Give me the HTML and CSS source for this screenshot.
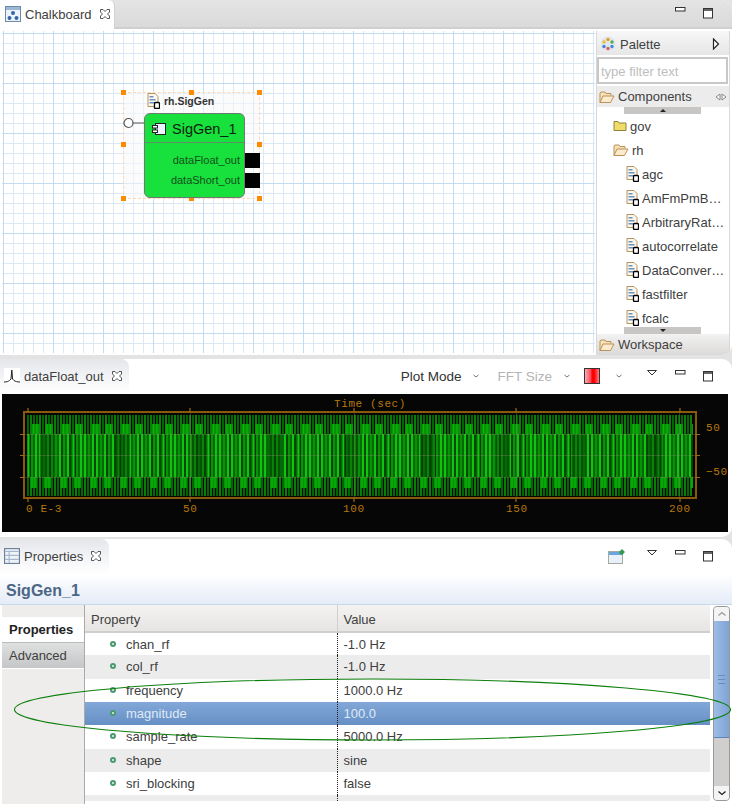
FILE: index.html
```html
<!DOCTYPE html>
<html>
	<head>
		<meta charset="UTF-8">
		<title>Chalkboard</title>
		<link rel="stylesheet" href="styles.css">
	</head>
	<body>
		<svg class="defs" width="0" height="0">
			<defs>
				<symbol id="i-close" viewBox="0 0 12 12">
					<path d="M1.500 1.500h2.500l2 2 2-2h2.500v2.500l-2 2 2 2v2.500h-2.500l-2-2-2 2h-2.500v-2.500l2-2-2-2z" fill="#fff" stroke="#555"/>
				</symbol>
				<symbol id="i-min" viewBox="0 0 12 12">
					<rect x="1.500" y=".5" width="9.500" height="3.500" fill="#fff" stroke="#333"/>
				</symbol>
				<symbol id="i-max" viewBox="0 0 12 12">
					<rect x="1.500" y="1.500" width="9" height="9.500" fill="#fff" stroke="#333"/>
					<path d="M1.500 3h9" stroke="#333" stroke-width="1.500"/>
				</symbol>
				<symbol id="i-menu" viewBox="0 0 12 12">
					<path d="M1.500 .5h9l-4.500 4.500z" fill="#fff" stroke="#333"/>
				</symbol>
				<symbol id="i-chev" viewBox="0 0 8 8">
					<path d="M1.500 3l2.500 2 2.500-2" fill="none" stroke="#777"/>
				</symbol>
				<symbol id="i-open" viewBox="0 0 16 14">
					<path d="M1 12.500v-9.500l1-1h4l1 1.500h5v2" fill="#f7e2b8" stroke="#b9925a"/>
					<path d="M1 12.500l3-6.500h11l-3.500 6.500z" fill="#fbeacb" stroke="#b9925a"/>
				</symbol>
				<symbol id="i-folder" viewBox="0 0 14 12">
					<path d="M1 10.500v-9h4l1 1.500h7v7.500z" fill="#f1dc6a" stroke="#8c8240"/>
				</symbol>
				<symbol id="i-doc" viewBox="0 0 13 16">
					<path d="M1 .5h7l3 3v10h-10z" fill="#fdf8ee" stroke="#b4945c"/>
					<path d="M2.500 3h4v1.500h-4zm0 3h6v1.500h-6zm0 3h6v1.500h-6z" fill="#6f8fc0"/>
					<rect x="7.500" y="9.500" width="5" height="6" rx="1" fill="#fff" stroke="#000" stroke-width="1.300"/>
				</symbol>
			</defs>
		</svg>

		<!-- chalkboard -->
		<section class="panel top">
			<div class="tabbar grey">
				<div class="tab">
					<svg width="16" height="16" viewBox="0 0 16 16"><rect x=".5" y=".5" width="15" height="15" fill="#eef3fa" stroke="#6f8aa8"/><path d="M1 1h14v3h-14z" fill="#9db7d6"/><circle cx="8" cy="7" r="2" fill="#2f68a8"/><circle cx="4.500" cy="12" r="2" fill="#2f68a8"/><circle cx="11.500" cy="12" r="2" fill="#2f68a8"/></svg>
					<span>Chalkboard</span>
					<svg class="x" width="12" height="12"><use href="#i-close"/></svg>
				</div>
				<div class="tools">
					<svg width="12" height="12"><use href="#i-min"/></svg>
					<svg width="12" height="12"><use href="#i-max"/></svg>
				</div>
			</div>
			<div class="board">
				<div class="canvas">
					<div class="select">
						<i class="h h1"></i><i class="h h2"></i><i class="h h3"></i><i class="h h4"></i>
						<i class="h h5"></i><i class="h h6"></i><i class="h h7"></i><i class="h h8"></i>
					</div>
					<div class="node-name">
						<svg width="13" height="16"><use href="#i-doc"/></svg>
						<span>rh.SigGen</span>
					</div>
					<svg class="lolly" width="22" height="12"><circle cx="5.500" cy="6" r="4.500" fill="#fff" stroke="#555" stroke-width="1.200"/><path d="M10 6h11" stroke="#555"/></svg>
					<div class="node">
						<div class="node-title">
							<svg width="14" height="12" viewBox="0 0 14 12"><rect x="3.500" y=".5" width="10" height="11" fill="#e8f4ff" stroke="#222"/><rect x=".5" y="2.500" width="5" height="2.500" fill="#fff" stroke="#222"/><rect x=".5" y="7" width="5" height="2.500" fill="#fff" stroke="#222"/></svg>
							<span>SigGen_1</span>
						</div>
						<div class="node-port">dataFloat_out</div>
						<div class="node-port">dataShort_out</div>
					</div>
					<i class="port p1"></i>
					<i class="port p2"></i>
				</div>
				<div class="palette">
					<div class="pal-head">
						<svg width="16" height="16" viewBox="0 0 16 16"><circle cx="8" cy="8" r="7.500" fill="#dfe6f2"/><circle cx="8" cy="3.500" r="1.700" fill="#e8a020"/><circle cx="12" cy="6" r="1.700" fill="#58b040"/><circle cx="12" cy="10.500" r="1.700" fill="#3f8fd8"/><circle cx="8" cy="12.500" r="1.700" fill="#e06050"/><circle cx="4" cy="10.500" r="1.700" fill="#5080d0"/><circle cx="4" cy="6" r="1.700" fill="#e8c030"/></svg>
						<span>Palette</span>
						<svg class="pal-arrow" width="8" height="12" viewBox="0 0 8 12"><path d="M1.500 1l5 5-5 5z" fill="#fff" stroke="#222" stroke-width="1.200"/></svg>
					</div>
					<div class="pal-filter">type filter text</div>
					<div class="drawer open-drawer">
						<svg width="16" height="14"><use href="#i-open"/></svg>
						<span>Components</span>
						<svg class="pin" width="12" height="8" viewBox="0 0 12 8"><path d="M5 1l-4 3 4 3zm2 0l4 3-4 3z" fill="#fff" stroke="#888"/></svg>
					</div>
					<div class="tree">
						<div class="scroll-btn up"><b></b></div>
						<div class="item lvl1"><svg width="14" height="12"><use href="#i-folder"/></svg>gov</div>
						<div class="item lvl1"><svg width="16" height="14"><use href="#i-open"/></svg>rh</div>
						<div class="item lvl2"><svg width="13" height="16"><use href="#i-doc"/></svg>agc</div>
						<div class="item lvl2"><svg width="13" height="16"><use href="#i-doc"/></svg>AmFmPmB…</div>
						<div class="item lvl2"><svg width="13" height="16"><use href="#i-doc"/></svg>ArbitraryRat…</div>
						<div class="item lvl2"><svg width="13" height="16"><use href="#i-doc"/></svg>autocorrelate</div>
						<div class="item lvl2"><svg width="13" height="16"><use href="#i-doc"/></svg>DataConver…</div>
						<div class="item lvl2"><svg width="13" height="16"><use href="#i-doc"/></svg>fastfilter</div>
						<div class="item lvl2"><svg width="13" height="16"><use href="#i-doc"/></svg>fcalc</div>
						<div class="scroll-btn down"><b></b></div>
					</div>
					<div class="drawer">
						<svg width="16" height="14"><use href="#i-open"/></svg>
						<span>Workspace</span>
					</div>
				</div>
			</div>
		</section>

		<!-- plot -->
		<section class="panel middle">
			<div class="tabbar">
				<div class="tab soft">
					<svg width="16" height="16" viewBox="0 0 16 16"><rect width="16" height="16" fill="#fff"/><path d="M0 14c3 0 4-.5 5.500-1.500l1.500-1.500.8-9 .8 9 1.400 1.500c1.500 1 3 1.500 6 1.500" fill="none" stroke="#222"/></svg>
					<span>dataFloat_out</span>
					<svg class="x" width="12" height="12"><use href="#i-close"/></svg>
				</div>
				<div class="tools plot-tools">
					<span class="combo">Plot Mode</span>
					<svg width="8" height="8"><use href="#i-chev"/></svg>
					<span class="combo off">FFT Size</span>
					<svg width="8" height="8"><use href="#i-chev"/></svg>
					<svg class="red" width="16" height="16" viewBox="0 0 16 16"><defs><linearGradient id="redbar"><stop offset="0" stop-color="#ffb0b8"/><stop offset=".4" stop-color="#ff5060"/><stop offset=".5" stop-color="#f00"/><stop offset=".65" stop-color="#f00"/><stop offset="1" stop-color="#ff8a94"/></linearGradient></defs><rect x=".5" y=".5" width="15" height="15" fill="url(#redbar)" stroke="#333"/></svg>
					<svg class="chev3" width="8" height="8"><use href="#i-chev"/></svg>
					<svg class="vm" width="12" height="12"><use href="#i-menu"/></svg>
					<svg width="12" height="12"><use href="#i-min"/></svg>
					<svg width="12" height="12"><use href="#i-max"/></svg>
				</div>
			</div>
			<div class="plot">
				<svg width="726" height="138" viewBox="2 394 726 138">
					<defs>
						<pattern id="thin" width="30" height="10" patternUnits="userSpaceOnUse" x="27">
							<path d="M1 0v10M7 0v10M10 0v10M16 0v10M22 0v10M25 0v10" stroke="#007000" stroke-width="1.800"/>
							<path d="M4 0v10M13 0v10M19 0v10M28 0v10" stroke="#0aa80a" stroke-width="1.500"/>
						</pattern>
						<pattern id="blocksUp" width="30" height="10" patternUnits="userSpaceOnUse" x="30">
							<path d="M2 0h8v10h-8zM15 0h8v10h-8z" fill="#0a8f0a"/>
							<path d="M3.500 0v10M7 0v10M17 0v10M20.500 0v10" stroke="#0b0" stroke-width="1.200"/>
						</pattern>
						<pattern id="blocksDown" width="30" height="11" patternUnits="userSpaceOnUse" x="28">
							<path d="M2 0h7v11h-7zM16 0h7v11h-7z" fill="#0a8f0a"/>
							<path d="M4 0v11M7 0v11M18 0v11M21 0v11" stroke="#0b0" stroke-width="1.200"/>
						</pattern>
						<pattern id="mid" width="45" height="21" patternUnits="userSpaceOnUse" x="27">
							<rect width="45" height="21" fill="#046804"/>
							<path d="M1.500 0v21M9 0v21M13 0v21M21 0v21M25 0v21M33 0v21M41 0v21" stroke="#0fc40f" stroke-width="2"/>
							<path d="M5 0v21M17 0v21M29 0v21M37 0v21" stroke="#089208" stroke-width="2"/>
							<path d="M3.300 0v21M23 0v21M35 0v21M43 0v21" stroke="#010" stroke-width=".8"/>
						</pattern>
						<pattern id="patch" width="76" height="43" patternUnits="userSpaceOnUse" x="40">
							<rect width="14" height="43" fill="#014001" fill-opacity=".5"/>
						</pattern>
					</defs>
					<rect x="2" y="394" width="726" height="138" fill="#060606"/>
					<rect x="27" y="415" width="666" height="81" fill="url(#thin)"/>
					<rect x="27" y="424" width="666" height="10" fill="url(#blocksUp)"/>
					<rect x="27" y="434" width="666" height="43" fill="url(#mid)"/>
					<rect x="27" y="434" width="666" height="43" fill="url(#patch)"/>
					<rect x="27" y="477" width="666" height="11" fill="url(#blocksDown)"/>
					<path d="M25 434.500h670M25 455.500h670M25 477.500h670M190.500 413v84M354.500 413v84M516.500 413v84M679.500 413v84" stroke="#8a8a6a" stroke-opacity=".35"/>
					<rect x="24" y="412" width="672" height="86" fill="none" stroke="#8a5a0c" stroke-width="2"/>
					<path d="M28 408v4M190 408v4M354 408v4M516 408v4M680 408v4M28 498v4M190 498v4M354 498v4M516 498v4M680 498v4M20 434.500h4M20 455.500h4M20 477.500h4M696 434.500h4M696 455.500h4M696 477.500h4" stroke="#a06a10" stroke-width="1.200"/>
					<g class="plot-txt">
						<text x="334" y="407">Time (sec)</text>
						<text x="26" y="512">0 E-3</text>
						<text x="183" y="512">50</text>
						<text x="343" y="512">100</text>
						<text x="506" y="512">150</text>
						<text x="669" y="512">200</text>
						<text x="706" y="431">50</text>
						<text x="706" y="475">−50</text>
					</g>
				</svg>
			</div>
		</section>

		<!-- properties -->
		<section class="panel bottom">
			<div class="tabbar prop-bar">
				<div class="tab soft">
					<svg width="16" height="16" viewBox="0 0 14 14"><rect x=".5" y=".5" width="13" height="13" fill="#eef3fa" stroke="#6f7f95"/><path d="M1 3h12M4.500 3v10M1 6.500h12M1 10h12" stroke="#a8b8cc"/></svg>
					<span>Properties</span>
					<svg class="x" width="12" height="12"><use href="#i-close"/></svg>
				</div>
				<div class="tools">
					<svg class="pin-view" width="17" height="16" viewBox="0 0 17 16"><rect x=".5" y="3.500" width="14" height="12" fill="#e8f0fa" stroke="#a8a89c"/><path d="M1 4h13v3h-13z" fill="#6aa6dc"/><path d="M9 9l3-3-1-2 3-3 3 3-3 3-2-1-3 3z" fill="#2f9a50"/></svg>
					<svg class="vm" width="12" height="12"><use href="#i-menu"/></svg>
					<svg width="12" height="12"><use href="#i-min"/></svg>
					<svg width="12" height="12"><use href="#i-max"/></svg>
				</div>
			</div>
			<div class="form-title">SigGen_1</div>
			<div class="form-body">
				<div class="side">
					<div class="side-tab active">Properties</div>
					<div class="side-tab">Advanced</div>
				</div>
				<div class="table-wrap">
					<table class="props" cellspacing="0" cellpadding="0">
						<thead>
							<tr><th class="c1">Property</th><th>Value</th></tr>
						</thead>
						<tbody>
							<tr><td class="c1"><i class="dot"></i>chan_rf</td><td>-1.0 Hz</td></tr>
							<tr><td class="c1"><i class="dot"></i>col_rf</td><td>-1.0 Hz</td></tr>
							<tr><td class="c1"><i class="dot"></i>frequency</td><td>1000.0 Hz</td></tr>
							<tr class="sel"><td class="c1"><i class="dot"></i>magnitude</td><td>100.0</td></tr>
							<tr><td class="c1"><i class="dot"></i>sample_rate</td><td>5000.0 Hz</td></tr>
							<tr><td class="c1"><i class="dot"></i>shape</td><td>sine</td></tr>
							<tr><td class="c1"><i class="dot"></i>sri_blocking</td><td>false</td></tr>
							<tr class="tail"><td class="c1"></td><td></td></tr>
						</tbody>
					</table>
				</div>
				<div class="vbar">
					<div class="vbtn"><svg width="10" height="8" viewBox="0 0 10 8"><path d="M1.500 5.500l3.500-3 3.500 3" fill="none" stroke="#999" stroke-width="1.200"/></svg></div>
					<div class="vthumb"><b></b></div>
					<div class="vtrack"></div>
					<div class="vbtn"><svg width="10" height="8" viewBox="0 0 10 8"><path d="M1.500 2.500l3.500 3 3.500-3" fill="none" stroke="#222" stroke-width="1.300"/></svg></div>
				</div>
			</div>
		</section>

		<svg class="ring" width="732" height="804"><ellipse cx="372.500" cy="709.500" rx="358" ry="30.500" fill="none" stroke="#0c7f0c" stroke-width="1.100"/></svg>
	</body>
</html>
```

FILE: styles.css
```css
body {
	margin: 0;
	width: 732px;
	height: 804px;
	overflow: hidden;
	position: relative;
	background: #e3e3e3;
	font-family: "Liberation Sans", Arial, sans-serif;
	font-size: 13px;
	color: #404040;
}

svg {
	display: block;
	flex: none;
}

i {
	display: block;
}

.defs {
	position: absolute;
}

.panel {
	background: #fff;
	border-radius: 0 10px 10px 0;
	overflow: hidden;
}

.top {
	height: 355px;
}

.middle {
	height: 178px;
	margin-top: 4px;
}

.bottom {
	height: 265px;
	margin-top: 2px;
	border-radius: 0 10px 0 0;
}

.tabbar {
	display: flex;
	height: 35px;
	box-sizing: border-box;
}

.tabbar.grey {
	height: 29px;
	background: linear-gradient(#e4e4e4, #dadada);
	border-bottom: 2px solid #cfcfcf;
}

.tab {
	display: flex;
	align-items: center;
	gap: 4px;
	height: 29px;
	width: 115px;
	box-sizing: border-box;
	padding: 0 0 1px 5px;
	background: #fff;
	border-radius: 0 6px 0 0;
	border-right: 1px solid #d2d2d2;
}

.tab .x {
	margin-left: 3px;
}

.tab.soft {
	width: 129px;
	height: 35px;
	padding: 0 0 1px 4px;
	border: 0;
	border-radius: 0 8px 0 0;
	background: linear-gradient(#e4e6ea, #f0f1f4 40%, #fff);
}

.prop-bar .tab.soft {
	width: 109px;
}

.tools {
	display: flex;
	align-items: center;
	gap: 16px;
	margin-left: auto;
	padding: 0 18px 1px 0;
}

.combo {
	font-size: 13.500px;
	color: #333;
}

.off {
	color: #b4b4b4;
}

.plot-tools {
	gap: 11px;
}

.plot-tools .combo.off {
	margin-left: 6px;
}

.plot-tools .red {
	margin-left: 2px;
}

.plot-tools .chev3 {
	margin-left: 4px;
}

.plot-tools .vm {
	margin-left: 12px;
}

.plot-tools .vm ~ svg {
	margin-left: 5px;
}

.pin-view {
	margin-right: 5px;
}

/* board */
.board {
	display: flex;
	height: 324px;
	padding: 2px 2px 0;
}

.canvas {
	position: relative;
	flex: 1;
	margin-bottom: 2px;
	background-color: #fff;
	background-image:
		linear-gradient(90deg, #c4dcf2 1px, transparent 1px),
		linear-gradient(#c4dcf2 1px, transparent 1px),
		linear-gradient(90deg, #dbe8f6 1px, transparent 1px),
		linear-gradient(#dbe8f6 1px, transparent 1px);
	background-size: 50px 50px, 50px 50px, 10px 10px, 10px 10px;
	background-position: 1px 2px, 1px 2px, 1px 2px, 1px 2px;
}

.select {
	position: absolute;
	left: 121px;
	top: 61px;
	width: 135px;
	height: 105px;
	background: rgba(248, 248, 250, .55);
	border: 1px dashed #fcd9b4;
}

.h {
	position: absolute;
	width: 5px;
	height: 5px;
	background: #ff8a00;
}

.h1, .h4, .h6 { left: -3px; }
.h2, .h7 { left: 65px; }
.h3, .h5, .h8 { left: 133px; }
.h1, .h2, .h3 { top: -3px; }
.h4, .h5 { top: 49px; }
.h6, .h7, .h8 { top: 103px; }

.node-name {
	position: absolute;
	left: 145px;
	top: 62px;
	display: flex;
	align-items: center;
	gap: 4px;
	font-size: 10.500px;
	font-weight: bold;
	color: #333;
}

.lolly {
	position: absolute;
	left: 121px;
	top: 86px;
}

.node {
	position: absolute;
	left: 142px;
	top: 82px;
	width: 101px;
	height: 85px;
	box-sizing: border-box;
	background: #18e03c;
	border: 1px solid #6e7a70;
	border-radius: 6px;
}

.node-title {
	display: flex;
	align-items: center;
	gap: 6px;
	height: 29px;
	box-sizing: border-box;
	padding: 1px 0 0 7px;
	margin-bottom: 8px;
	border-bottom: 1px solid #5f8f68;
	font-size: 14.500px;
	color: #0a1f0a;
}

.node-port {
	height: 20px;
	padding-right: 4px;
	text-align: right;
	font-size: 11px;
	line-height: 18px;
	color: #14501e;
}

.port {
	position: absolute;
	left: 243px;
	width: 15px;
	height: 15px;
	background: #000;
}

.p1 { top: 122px; }
.p2 { top: 142px; }

/* palette */
.palette {
	display: flex;
	flex-direction: column;
	width: 134px;
	margin-left: 1px;
	border-left: 1px solid #d8d8d8;
	border-right: 1px solid #d8d8d8;
	box-sizing: border-box;
}

.pal-head {
	display: flex;
	align-items: center;
	gap: 4px;
	height: 24px;
	box-sizing: border-box;
	padding: 2px 0 0 3px;
	background: linear-gradient(#f7f7f7, #e6e6e6);
}

.pal-arrow {
	margin-left: auto;
	margin-right: 9px;
}

.pal-filter {
	height: 27px;
	line-height: 25px;
	box-sizing: border-box;
	margin: 2px 1px 2px 0;
	padding-left: 2px;
	border: 2px solid #c8c8c8;
	color: #bdbdbd;
}

.drawer {
	display: flex;
	align-items: center;
	gap: 3px;
	height: 21px;
	padding-left: 2px;
	background: linear-gradient(#f2f2f2, #dcdad8);
}

.open-drawer {
	background: #ececec;
}

.pin {
	margin-left: auto;
	margin-right: 2px;
}

.tree {
	position: relative;
	flex: 1;
	padding-top: 7px;
	overflow: hidden;
}

.scroll-btn {
	position: absolute;
	left: 27px;
	width: 77px;
	height: 7px;
	background: #c8c6c4;
}

.scroll-btn b {
	display: block;
	width: 0;
	margin: 2px auto 0;
	border-left: 3px solid transparent;
	border-right: 3px solid transparent;
}

.up { top: 0; }
.up b { border-bottom: 3px solid #222; }
.down { bottom: 0; }
.down b { border-top: 3px solid #222; }

.item {
	display: flex;
	align-items: center;
	gap: 3px;
	height: 24px;
	white-space: nowrap;
}

.lvl1 { padding-left: 16px; }
.lvl2 { padding-left: 29px; }

/* plot */
.plot {
	padding: 0 2px;
}

.plot-txt {
	font-family: "Liberation Mono", monospace;
	font-size: 11px;
	letter-spacing: .6px;
	fill: #b8780e;
}

/* properties */
.form-title {
	height: 31px;
	padding: 8px 0 0 6px;
	box-sizing: border-box;
	background: linear-gradient(#fff, #e4ecf7);
	border-bottom: 1px solid #c7d9ee;
	font-size: 16px;
	font-weight: bold;
	color: #4c6686;
}

.form-body {
	display: flex;
	height: 199px;
	padding: 0 2px;
}

.side {
	width: 83px;
	flex: none;
	padding-top: 12px;
	box-sizing: border-box;
	background: #eeedec;
	border-right: 1px solid #aaa;
}

.side-tab {
	height: 26px;
	line-height: 25px;
	padding-left: 7px;
	box-sizing: border-box;
	background: linear-gradient(#dfe0e0, #c4c6c7);
	border-bottom: 1px solid #fff;
}

.side-tab.active {
	background: #fff;
	font-weight: bold;
	color: #222;
	border-bottom: 1px solid #bbb;
}

.table-wrap {
	width: 625px;
	flex: none;
}

.props {
	width: 100%;
	border-collapse: collapse;
	table-layout: fixed;
}

.props .c1 {
	width: 252px;
}

.props th {
	height: 27px;
	padding: 3px 0 0 6px;
	box-sizing: border-box;
	text-align: left;
	font-weight: normal;
	background: linear-gradient(#f4f3f1, #e6e5e3);
	border-bottom: 2px solid #d0cfcd;
	color: #404040;
}

.props td {
	height: 23.330px;
	padding: 0 0 0 6px;
	box-sizing: border-box;
}

.props td.c1 {
	position: relative;
	padding-left: 41px;
	border-right: 1px dotted #222;
}

.props th.c1 {
	border-right: 1px solid #d0cfcd;
}

.props tbody tr:nth-child(even) {
	background: #ececec;
}

.props tbody tr.sel {
	background: linear-gradient(#82a8d8, #668fc4);
	color: #dfe9f6;
}

.props .tail td {
	height: 6px;
}

.dot {
	position: absolute;
	left: 25px;
	top: 8px;
	width: 6px;
	height: 6px;
	box-sizing: border-box;
	border: 2px solid #4a9a70;
	border-radius: 50%;
	background: #e8f5ee;
}

.vbar {
	display: flex;
	flex-direction: column;
	width: 17px;
	margin: 1px 0 3px 3px;
	border: 1px solid #999;
	border-radius: 4px;
	box-sizing: border-box;
	background: #d0cfce;
	overflow: hidden;
}

.vbtn {
	display: flex;
	align-items: center;
	justify-content: center;
	height: 14px;
	background: #f4f4f4;
}

.vthumb {
	display: flex;
	align-items: center;
	justify-content: center;
	height: 116px;
	background: linear-gradient(90deg, #9dbde6, #7ea3d6);
	border-bottom: 1px solid #5f86bb;
}

.vthumb b {
	width: 7px;
	height: 7px;
	border-top: 1px solid #6c8cb8;
	border-bottom: 1px solid #6c8cb8;
	background: linear-gradient(transparent 40%, #6c8cb8 40%, #6c8cb8 60%, transparent 60%);
}

.vtrack {
	flex: 1;
}

.ring {
	position: absolute;
	left: 0;
	top: 0;
	pointer-events: none;
}
```
